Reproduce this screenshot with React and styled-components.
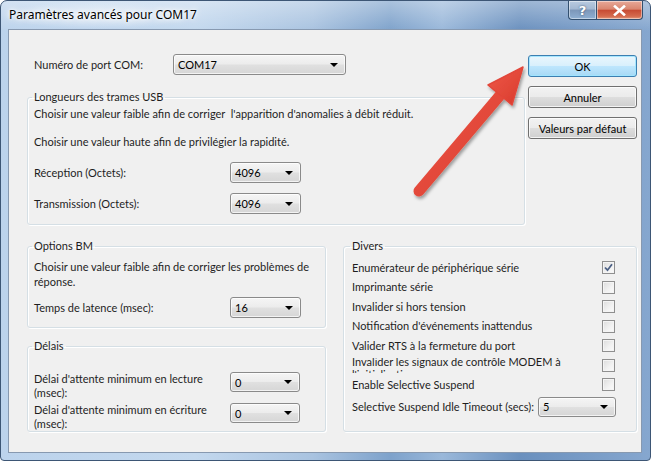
import React from 'react';
import styled, { createGlobalStyle } from 'styled-components';

const GlobalStyle = createGlobalStyle`
  html, body {
    margin: 0;
    padding: 0;
    background: #ffffff;
  }
  body {
    font-family: Lato, "Noto Sans", sans-serif;
    font-size: 11px;
    color: #1e1e1e;
  }
`;

function Select({ value, width, height }) {
  return (
    <SelectBox $width={width} $height={height}>
      <span>{value}</span>
      <Caret />
    </SelectBox>
  );
}

function Check({ checked }) {
  return (
    <CheckBox>
      {checked && (
        <svg width="9" height="9" viewBox="0 0 9 9">
          <path d="M1 4.5 L3.5 7.2 L8 1.2" fill="none" stroke="#4d6185" strokeWidth="1.8" />
        </svg>
      )}
    </CheckBox>
  );
}

function Arrow() {
  return (
    <ArrowLayer width="651" height="461" viewBox="0 0 651 461">
      <defs>
        <filter id="shadow" x="-20%" y="-20%" width="140%" height="140%">
          <feDropShadow dx="1.5" dy="2.5" stdDeviation="1.6" floodColor="#000" floodOpacity="0.35" />
        </filter>
        <linearGradient id="red" x1="0" y1="0" x2="1" y2="1">
          <stop offset="0" stopColor="#ef5a49" />
          <stop offset="1" stopColor="#d8392c" />
        </linearGradient>
      </defs>
      <g filter="url(#shadow)">
        <line x1="419" y1="191" x2="502" y2="93" stroke="url(#red)" strokeWidth="11" strokeLinecap="round" />
        <polygon points="523,67 512,105 488,85" fill="url(#red)" stroke="#e2463a" strokeWidth="1.5" strokeLinejoin="round" />
      </g>
    </ArrowLayer>
  );
}

export default function App() {
  const divers = [
    ['Enumérateur de périphérique série', true],
    ['Imprimante série', false],
    ['Invalider si hors tension', false],
    ["Notification d'événements inattendus", false],
    ['Valider RTS à la fermeture du port', false],
  ];

  return (
    <>
      <GlobalStyle />
      <Window>
        <TitleBar>
          <Title>Paramètres avancés pour COM17</Title>
          <Caption>
            <HelpButton>?</HelpButton>
            <CloseButton>
              <svg width="13" height="11" viewBox="0 0 13 11">
                <path d="M2 1.5 L11 9.5 M11 1.5 L2 9.5" stroke="#ffffff" strokeWidth="2.6" strokeLinecap="square" />
              </svg>
            </CloseButton>
          </Caption>
        </TitleBar>

        <Client>
          <TopRow>
            <LeftTop>
              <PortRow>
                <PortLabel>Numéro de port COM:</PortLabel>
                <Select value="COM17" width={173} />
              </PortRow>

              <Group $top={14}>
                <Legend>Longueurs des trames USB</Legend>
                <Para $gap={1}>Choisir une valeur faible afin de corriger  l'apparition d'anomalies à débit réduit.</Para>
                <Para $gap={12}>Choisir une valeur haute afin de privilégier la rapidité.</Para>
                <FieldRow $gap={12}>
                  <FieldLabel>Réception (Octets):</FieldLabel>
                  <Select value="4096" width={71} />
                </FieldRow>
                <FieldRow $gap={10} $last>
                  <FieldLabel>Transmission (Octets):</FieldLabel>
                  <Select value="4096" width={71} />
                </FieldRow>
              </Group>
            </LeftTop>

            <Buttons>
              <Button $default>OK</Button>
              <Button>Annuler</Button>
              <Button>Valeurs par défaut</Button>
            </Buttons>
          </TopRow>

          <BottomRow>
            <LeftBottom>
              <Group>
                <Legend>Options BM</Legend>
                <Para $gap={5} $lh={15}>
                  Choisir une valeur faible afin de corriger les problèmes de
                  <br />
                  réponse.
                </Para>
                <FieldRow $gap={8} $last $pad={9}>
                  <FieldLabel>Temps de latence (msec):</FieldLabel>
                  <Select value="16" width={71} />
                </FieldRow>
              </Group>

              <Group $top={10} $grow>
                <Legend>Délais</Legend>
                <DelayRow $gap={18}>
                  <FieldLabel $lh={14}>
                    Délai d'attente minimum en lecture
                    <br />
                    (msec):
                  </FieldLabel>
                  <Select value="0" width={70} height={20} />
                </DelayRow>
                <DelayRow $gap={3}>
                  <FieldLabel $lh={14}>
                    Délai d'attente minimum en écriture
                    <br />
                    (msec):
                  </FieldLabel>
                  <Select value="0" width={70} height={20} />
                </DelayRow>
              </Group>
            </LeftBottom>

            <DiversGroup>
              <Legend>Divers</Legend>
              <CheckList>
                {divers.map(([label, checked]) => (
                  <CheckRow key={label}>
                    <span>{label}</span>
                    <Check checked={checked} />
                  </CheckRow>
                ))}
                <CheckRow>
                  <Clipped>
                    <span>
                      Invalider les signaux de contrôle MODEM à
                      <br />
                      l'initialisation
                    </span>
                  </Clipped>
                  <Check />
                </CheckRow>
                <CheckRow>
                  <span>Enable Selective Suspend</span>
                  <Check />
                </CheckRow>
                <TimeoutRow>
                  <span>Selective Suspend Idle Timeout (secs):</span>
                  <Select value="5" width={78} height={20} />
                </TimeoutRow>
              </CheckList>
            </DiversGroup>
          </BottomRow>
        </Client>

        <Arrow />
      </Window>
    </>
  );
}

const Window = styled.div`
  position: relative;
  width: 651px;
  height: 461px;
  box-sizing: border-box;
  display: flex;
  flex-direction: column;
  border: 1px solid #3d5675;
  border-radius: 7px 7px 4px 4px;
  background:
    linear-gradient(180deg, rgba(255, 255, 255, 0.35) 0px, rgba(255, 255, 255, 0) 30px),
    linear-gradient(90deg, #bcd3ec 0%, #c3d8ee 30%, #a9c3e0 48%, #7ea2cb 60%, #9ab8da 68%, #6a90be 80%, #86a7cf 100%);
  overflow: hidden;
`;

const TitleBar = styled.div`
  height: 28px;
  display: flex;
  justify-content: space-between;
  align-items: flex-start;
  flex-shrink: 0;
`;

const Title = styled.div`
  padding-left: 8px;
  line-height: 28px;
  font-family: "Noto Sans", sans-serif;
  font-size: 12px;
  color: #000000;
  text-shadow: 0 0 6px #ffffff, 0 0 10px #ffffff, 0 0 3px #ffffff;
  background: radial-gradient(ellipse at center, rgba(255, 255, 255, 0.55) 0%, rgba(255, 255, 255, 0) 70%);
`;

const Caption = styled.div`
  display: flex;
  margin-right: 7px;
`;

const CaptionButton = styled.div`
  height: 19px;
  box-sizing: border-box;
  display: flex;
  align-items: center;
  justify-content: center;
  border: 1px solid #33506f;
  border-top: none;
  box-shadow: inset 0 0 0 1px rgba(255, 255, 255, 0.45);
`;

const HelpButton = styled(CaptionButton)`
  width: 28px;
  border-radius: 0 0 0 4px;
  border-right: none;
  background: linear-gradient(180deg, #b9cbe0 0%, #a3b8d2 45%, #7c97b9 50%, #8fb0d3 100%);
  color: #ffffff;
  font-family: "DejaVu Sans", sans-serif;
  font-weight: bold;
  font-size: 13px;
  text-shadow: 0 0 2px #2b4463;
`;

const CloseButton = styled(CaptionButton)`
  width: 47px;
  border-radius: 0 0 4px 0;
  background: linear-gradient(180deg, #e7a999 0%, #d98670 45%, #c74c34 52%, #d56b4e 85%, #e39a7e 100%);
`;

const Client = styled.div`
  flex: 1;
  margin: 0 8px 7px 7px;
  background: #f0f0f0;
  border: 1px solid #8799b0;
  padding: 24px 4px 0 18px;
`;

const TopRow = styled.div`
  display: flex;
  gap: 3px;
`;

const LeftTop = styled.div`
  width: 498px;
  display: flex;
  flex-direction: column;
`;

const PortRow = styled.div`
  display: flex;
  align-items: center;
  height: 21px;
  padding-left: 7px;
`;

const PortLabel = styled.span`
  width: 139px;
`;

const Group = styled.fieldset`
  margin: ${(p) => p.$top || 0}px 0 0 0;
  padding: 0 6px 0 6px;
  border: 1px solid #d5dfe5;
  border-radius: 3px;
  box-shadow: inset 1px 1px 0 #ffffff, 1px 1px 0 #ffffff;
  min-width: 0;
  flex: ${(p) => (p.$grow ? 1 : 'none')};
`;

const Legend = styled.legend`
  padding: 0 2px;
  margin-left: -2px;
  line-height: 16px;
  color: #1e1e1e;
`;

const Para = styled.div`
  margin-top: ${(p) => p.$gap}px;
  line-height: ${(p) => p.$lh || 16}px;
  white-space: pre;
`;

const FieldRow = styled.div`
  display: flex;
  align-items: center;
  margin-top: ${(p) => p.$gap}px;
  margin-bottom: ${(p) => (p.$last ? p.$pad || 10 : 0)}px;
`;

const FieldLabel = styled.span`
  width: 196px;
  line-height: ${(p) => p.$lh || 16}px;
`;

const DelayRow = styled.div`
  display: flex;
  align-items: flex-start;
  margin-top: ${(p) => p.$gap}px;
`;

const SelectBox = styled.div`
  width: ${(p) => p.$width}px;
  height: ${(p) => p.$height || 21}px;
  box-sizing: border-box;
  display: flex;
  align-items: center;
  justify-content: space-between;
  padding: 0 7px 0 4px;
  border: 1px solid #8a8a8a;
  border-radius: 3px;
  background: linear-gradient(180deg, #f5f5f5 0%, #ececec 48%, #e0e0e0 52%, #d6d6d6 100%);
  box-shadow: inset 0 0 0 1px rgba(255, 255, 255, 0.7);
  color: #000000;
  flex-shrink: 0;
`;

const Caret = styled.span`
  width: 0;
  height: 0;
  border-left: 4px solid transparent;
  border-right: 4px solid transparent;
  border-top: 4px solid #000000;
`;

const Buttons = styled.div`
  width: 109px;
  margin-top: 1px;
  display: flex;
  flex-direction: column;
  gap: 9px;
`;

const Button = styled.div`
  height: 22px;
  box-sizing: border-box;
  display: flex;
  align-items: center;
  justify-content: center;
  border: 1px solid ${(p) => (p.$default ? '#3c7fb1' : '#707070')};
  border-radius: 3px;
  background: ${(p) =>
    p.$default
      ? 'linear-gradient(180deg, #eaf6fd 0%, #d9f0fc 48%, #bee6fd 52%, #a7d9f5 100%)'
      : 'linear-gradient(180deg, #f2f2f2 0%, #ebebeb 48%, #dddddd 52%, #cfcfcf 100%)'};
  box-shadow: inset 0 0 0 1px ${(p) => (p.$default ? 'rgba(160, 230, 255, 0.9)' : 'rgba(255, 255, 255, 0.75)')};
  color: #000000;
`;

const BottomRow = styled.div`
  display: flex;
  gap: 17px;
  margin-top: 13px;
`;

const LeftBottom = styled.div`
  width: 299px;
  display: flex;
  flex-direction: column;
`;

const DiversGroup = styled(Group)`
  flex: 1;
  padding: 0 21px 0 8px;
`;

const CheckList = styled.div`
  display: flex;
  flex-direction: column;
  margin-top: 4px;
`;

const CheckRow = styled.div`
  height: 19.5px;
  display: flex;
  align-items: center;
  justify-content: space-between;
  line-height: 16px;
  white-space: nowrap;
`;

const Clipped = styled.div`
  height: 15px;
  overflow: hidden;
  & > span {
    display: block;
    line-height: 13px;
    margin-top: -3px;
  }
`;

const TimeoutRow = styled.div`
  height: 22px;
  margin-top: 1px;
  display: flex;
  align-items: center;
  justify-content: space-between;
  margin-right: -1px;
  white-space: nowrap;
`;

const CheckBox = styled.div`
  width: 13px;
  height: 13px;
  box-sizing: border-box;
  border: 1px solid #8f8f8f;
  background: linear-gradient(135deg, #dcdcdc 0%, #f2f2f2 60%, #fbfbfb 100%);
  box-shadow: inset 0 0 0 1px #f4f4f4;
  display: flex;
  align-items: center;
  justify-content: center;
  flex-shrink: 0;
`;

const ArrowLayer = styled.svg`
  position: absolute;
  left: -1px;
  top: -1px;
  pointer-events: none;
`;
